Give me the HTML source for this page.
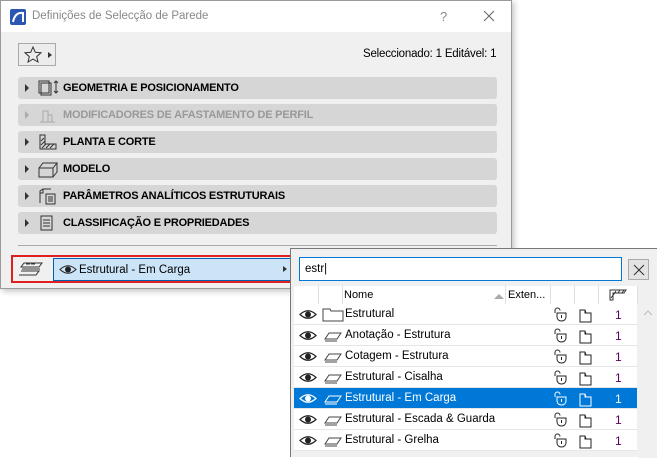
<!DOCTYPE html>
<html><head><meta charset="utf-8"><style>
*{box-sizing:border-box;margin:0;padding:0}
body{width:657px;height:457px;background:#fff;position:relative;overflow:hidden;font-family:"Liberation Sans",sans-serif;font-size:12px;color:#000}
.abs{position:absolute}
.dlg{left:0;top:0;width:512px;height:289px;background:#f0f0f0;border:1px solid #9a9a9a;box-shadow:2px 2px 6px rgba(0,0,0,.25)}
.title{left:0;top:0;width:510px;height:31px;background:#fff}
.bar{left:17px;width:479px;height:22px;background:#d6d6d6;border-radius:3px;font-weight:bold;font-size:11px;letter-spacing:-0.2px}
.bar .tri{position:absolute;left:7px;top:7px;width:0;height:0;border-left:4px solid #333;border-top:4px solid transparent;border-bottom:4px solid transparent}
.bar .t{position:absolute;left:45px;top:5px}
.bar svg{position:absolute;left:19px;top:2px}
.pop{left:290px;top:248px;width:367px;height:209px;background:#f0f0f0;border:1px solid #777;border-right:none;border-bottom:none}
.row{position:absolute;left:3px;width:343px;height:21px;background:#fff;border-bottom:1px solid #e6e6e6}
.row .n{position:absolute;left:51px;top:4px;font-size:11.5px}
.row .one{position:absolute;left:321px;top:4px;color:#5a0060}
.row svg{position:absolute}
.sel{background:#0078d7;color:#fff}
.sel .one{color:#fff}
</style></head><body>
<div class="abs dlg">
 <div class="abs title">
  <svg class="abs" style="left:9px;top:8px" width="16" height="16"><rect width="16" height="16" rx="2" fill="#2a56b4"/><path d="M3 13 Q5 3 13 4 L13 13" fill="none" stroke="#fff" stroke-width="2"/></svg>
  <div class="abs" style="left:31px;top:9px;font-size:11.5px;color:#888">Definições de Selecção de Parede</div>
  <div class="abs" style="left:439px;top:8px;font-size:13px;color:#888">?</div>
  <svg class="abs" style="left:482px;top:9px" width="12" height="12"><path d="M1 1L11 11M11 1L1 11" stroke="#666" stroke-width="1"/></svg>
 </div>
 <div class="abs" style="left:17px;top:42px;width:38px;height:23px;border:1px solid #aaa;background:#ececec">
  <svg class="abs" style="left:5px;top:2px" width="18" height="17"><path d="M9 1 L11.3 6.3 L17 6.8 L12.7 10.6 L14 16 L9 13.1 L4 16 L5.3 10.6 L1 6.8 L6.7 6.3Z" fill="none" stroke="#333"/></svg>
  <div class="abs" style="left:29px;top:8px;border-left:4px solid #333;border-top:3.5px solid transparent;border-bottom:3.5px solid transparent"></div>
 </div>
 <div class="abs" style="left:362px;top:47px;font-size:11.5px;letter-spacing:-0.2px">Seleccionado: 1 Editável: 1</div>
 <div class="abs bar" style="top:76px"><span class="tri"></span><svg width="22" height="18"><rect x="2" y="2" width="10" height="12" fill="none" stroke="#333"/><rect x="4" y="4" width="10" height="12" fill="none" stroke="#333"/><path d="M19 2v12M17 4l2-2 2 2M17 12l2 2 2-2" stroke="#333" fill="none"/></svg><span class="t">GEOMETRIA E POSICIONAMENTO</span></div>
 <div class="abs bar" style="top:103px;color:#999"><span class="tri" style="border-left-color:#aaa"></span><svg width="22" height="18"><path d="M3 16h15M6 16V5h5v11M11 9h4v7" stroke="#aaa" fill="none"/></svg><span class="t">MODIFICADORES DE AFASTAMENTO DE PERFIL</span></div>
 <div class="abs bar" style="top:130px"><span class="tri"></span><svg width="22" height="18"><path d="M3 2v14h16v-5H8V2z" fill="none" stroke="#333"/><path d="M4 8l3-3M4 12l4-4M5 15l4-4M9 15l4-4M13 15l4-4" stroke="#333"/></svg><span class="t">PLANTA E CORTE</span></div>
 <div class="abs bar" style="top:157px"><span class="tri"></span><svg width="22" height="18"><path d="M2 8h14v9H2zM2 8l4-5h14l-4 5M16 17l4-5V3" fill="none" stroke="#333"/></svg><span class="t">MODELO</span></div>
 <div class="abs bar" style="top:184px"><span class="tri"></span><svg width="22" height="18"><path d="M3 16V4l3-2h8M6 2v4H3" fill="none" stroke="#333"/><rect x="9" y="7" width="9" height="10" fill="none" stroke="#333"/><path d="M11 10h5M11 12h5M11 14h5" stroke="#333"/></svg><span class="t">PARÂMETROS ANALÍTICOS ESTRUTURAIS</span></div>
 <div class="abs bar" style="top:211px"><span class="tri"></span><svg width="22" height="18"><rect x="4" y="2" width="11" height="14" fill="none" stroke="#333"/><path d="M6 6h7M6 9h7M6 12h7" stroke="#333"/></svg><span class="t">CLASSIFICAÇÃO E PROPRIEDADES</span></div>
 <div class="abs" style="left:17px;top:244px;width:479px;height:1px;background:#aaa"></div>
 <div class="abs" style="left:10px;top:254px;width:283px;height:28px;border:2px solid #e02020"></div>
 <svg class="abs" style="left:18px;top:260px" width="26" height="16"><path d="M5 2h18l-3 4H2zM3 8h18M2 10h18l-3 4H0" fill="none" stroke="#333"/><path d="M7 3h4M12 3h4" stroke="#333"/></svg>
 <div class="abs" style="left:52px;top:257px;width:239px;height:23px;background:#cce4f7;border:1px solid #0060b0">
  <svg class="abs" style="left:5px;top:5px" width="18" height="11"><path d="M1 5.5Q9 -2 17 5.5Q9 13 1 5.5Z" fill="none" stroke="#222"/><circle cx="9" cy="5.5" r="3" fill="#222"/></svg>
  <div class="abs" style="left:25px;top:5px;font-size:11.5px">Estrutural - Em Carga</div>
  <div class="abs" style="left:229px;top:7px;border-left:4px solid #333;border-top:3.5px solid transparent;border-bottom:3.5px solid transparent"></div>
 </div>
</div>
<div class="abs pop">
 <div class="abs" style="left:8px;top:8px;width:323px;height:24px;background:#fff;border:1px solid #0078d7"><span class="abs" style="left:5px;top:5px;font-size:11.5px">estr|</span></div>
 <div class="abs" style="left:337px;top:10px;width:21px;height:21px;border:1px solid #aaa;background:#e3e3e3"><svg class="abs" style="left:4px;top:4px" width="12" height="12"><path d="M1 1L11 11M11 1L1 11" stroke="#333"/></svg></div>
 <div class="abs" style="left:3px;top:37px;width:343px;height:18px;background:#fff"></div>
 <div class="abs" style="left:27px;top:37px;width:1px;height:18px;background:#e0e0e0"></div>
 <div class="abs" style="left:51px;top:37px;width:1px;height:18px;background:#e0e0e0"></div>
 <div class="abs" style="left:214px;top:37px;width:1px;height:18px;background:#e0e0e0"></div>
 <div class="abs" style="left:259px;top:37px;width:1px;height:18px;background:#e0e0e0"></div>
 <div class="abs" style="left:283px;top:37px;width:1px;height:18px;background:#e0e0e0"></div>
 <div class="abs" style="left:307px;top:37px;width:1px;height:18px;background:#e0e0e0"></div>
 <div class="abs" style="left:346px;top:37px;width:1px;height:18px;background:#e0e0e0"></div>
 <div class="abs" style="left:53px;top:40px;font-size:11px">Nome</div>
 <div class="abs" style="left:203px;top:45px;border-bottom:5px solid #aaa;border-left:5px solid transparent;border-right:5px solid transparent"></div>
 <div class="abs" style="left:217px;top:40px;font-size:11px">Exten...</div>
 <svg class="abs" style="left:318px;top:40px" width="18" height="12"><path d="M1 11V1h16l-2 3H4v7z" fill="none" stroke="#333"/><path d="M2 9l5-7M5 5l2-3M9 4l2-3M13 4l2-3" stroke="#333"/></svg>
 <div class="abs" style="left:347px;top:55px;width:20px;height:154px;background:#f0f0f0"></div>
 <svg class="abs" style="left:352px;top:61px" width="10" height="6"><path d="M1 5l4-4 4 4" stroke="#bbb" fill="none"/></svg>
 <div class="row" style="top:55px"><span class="n">Estrutural</span><span class="one">1</span></div>
 <div class="row" style="top:76px"><span class="n">Anotação - Estrutura</span><span class="one">1</span></div>
 <div class="row" style="top:97px"><span class="n">Cotagem - Estrutura</span><span class="one">1</span></div>
 <div class="row" style="top:118px"><span class="n">Estrutural - Cisalha</span><span class="one">1</span></div>
 <div class="row sel" style="top:139px"><span class="n">Estrutural - Em Carga</span><span class="one">1</span></div>
 <div class="row" style="top:160px"><span class="n">Estrutural - Escada &amp; Guarda</span><span class="one">1</span></div>
 <div class="row" style="top:181px"><span class="n">Estrutural - Grelha</span><span class="one">1</span></div>
 <svg class="abs" style="left:0;top:55px" width="347" height="150">
  <defs>
   <g id="eye"><path d="M1 5.5Q9 -2 17 5.5Q9 13 1 5.5Z" fill="none" stroke="currentColor" stroke-width="1.2"/><circle cx="9" cy="5.5" r="3" fill="currentColor"/></g>
   <g id="lay"><path d="M5 1h12l-4 6H1z M1 9h12" fill="none" stroke="currentColor"/></g>
   <g id="lock"><path d="M1 5V2.5a2.5 2.5 0 0 1 5 0" fill="none" stroke="currentColor"/><path d="M3 5h9v4a4.5 4 0 0 1-9 0z" fill="none" stroke="currentColor"/><path d="M7.5 7v3" stroke="currentColor"/></g>
   <g id="box"><path d="M1 1h5l1 3h5v9H1z M6 1v3h1" fill="none" stroke="currentColor"/></g>
  </defs>
  <g color="#222">
   <use href="#eye" x="8" y="5"/><use href="#eye" x="8" y="26"/><use href="#eye" x="8" y="47"/><use href="#eye" x="8" y="68"/><use href="#eye" x="8" y="110"/><use href="#eye" x="8" y="131"/>
   <path d="M32 5h7l1 2h12v10H32z" fill="none" stroke="#444"/>
   <use href="#lay" x="33" y="28" color="#444"/><use href="#lay" x="33" y="49" color="#444"/><use href="#lay" x="33" y="70" color="#444"/><use href="#lay" x="33" y="112" color="#444"/><use href="#lay" x="33" y="133" color="#444"/>
   <use href="#lock" x="263" y="4"/><use href="#lock" x="263" y="25"/><use href="#lock" x="263" y="46"/><use href="#lock" x="263" y="67"/><use href="#lock" x="263" y="109"/><use href="#lock" x="263" y="130"/>
   <use href="#box" x="288" y="5"/><use href="#box" x="288" y="26"/><use href="#box" x="288" y="47"/><use href="#box" x="288" y="68"/><use href="#box" x="288" y="110"/><use href="#box" x="288" y="131"/>
  </g>
  <g color="#fff">
   <use href="#eye" x="8" y="89"/><use href="#lay" x="33" y="91"/><use href="#lock" x="263" y="88"/><use href="#box" x="288" y="89"/>
  </g>
 </svg>
</div>
</body></html>
